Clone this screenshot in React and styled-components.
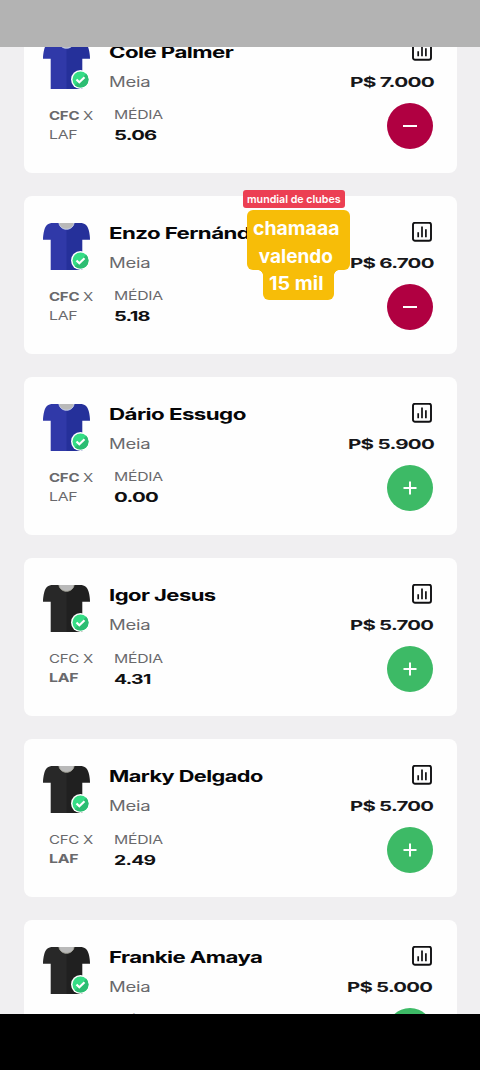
import React, { useLayoutEffect, useRef, useState } from 'react'
import styled, { createGlobalStyle } from 'styled-components'

const GlobalStyles = createGlobalStyle`
  * { box-sizing: border-box; }
  body {
    margin: 0;
    background: #000;
    font-family: Inter, "Liberation Sans", sans-serif;
  }
`

const Screen = styled.div`
  position: relative;
  display: flex;
  flex-direction: column;
  width: 480px;
  height: 1070px;
  overflow: hidden;
  background: #f0eff1;
`
const StatusBar = styled.header`
  flex: none;
  height: 46.5px;
  background: #b3b3b3;
`
const Viewport = styled.main`
  flex: 1;
  min-height: 0;
  overflow: hidden;
`
const NavBar = styled.footer`
  flex: none;
  height: 56px;
  background: #000;
`
// the list is scrolled a little, the first card starts above the viewport
const List = styled.div`
  display: flex;
  flex-direction: column;
  gap: 23.3px;
  margin-top: -31.5px;
  padding: 0 23.5px;
`
const Card = styled.article`
  flex: none;
  height: 157.8px;
  padding: 25.5px 23.500px 0 19.5px;
  border-radius: 8px;
  background: #fefefe;
`
const Top = styled.div`
  display: flex;
  height: 51px;
`
const Bottom = styled.div`
  display: flex;
  padding: 11px 0 0 6px;
`
const Kit = styled.div`
  position: relative;
  width: 47px;
  height: 48px;
  margin: 1px 18.5px 0 0;
`
const Badge = styled.svg`
  position: absolute;
  left: 28px;
  top: 28px;
`
const Info = styled.div`
  flex: 1;
`
const Side = styled.div`
  display: flex;
  flex-direction: column;
  align-items: flex-end;
  gap: 11px;
`
const StatsIcon = styled.svg`
  margin-right: 1.5px;
`
const Name = styled.div`
  height: 31.2px;
  font-size: 15.8px;
  line-height: 24px;
  font-weight: 700;
  letter-spacing: -0.4px;
  color: #060608;
`
const Position = styled.div`
  font-size: 14px;
  line-height: 20px;
  letter-spacing: -0.2px;
  color: #69696c;
`
const Price = styled.div`
  font-size: 13.5px;
  line-height: 20px;
  font-weight: 700;
  letter-spacing: -0.5px;
  color: #17171a;
`
const Match = styled.div`
  width: 65px;
  padding-top: 4.6px;
  font-size: 12px;
  line-height: 18.7px;
  letter-spacing: -0.2px;
  color: #69696c;
`
const Team = styled.div`
  display: flex;
  gap: 3.5px;
  font-weight: ${({ picked }) => (picked ? 700 : 400)};
`
const Versus = styled.span`
  font-weight: 400;
`
const Average = styled.div`
  flex: 1;
  padding-top: 2.8px;
  line-height: 20px;
`
const AverageLabel = styled.div`
  font-size: 12px;
  letter-spacing: -0.2px;
  color: #69696c;
`
const AverageValue = styled.div`
  font-size: 13.5px;
  font-weight: 700;
  letter-spacing: -0.5px;
  color: #101012;
`
const RoundButton = styled.button`
  display: flex;
  align-items: center;
  justify-content: center;
  width: 46.5px;
  height: 46.5px;
  padding: 0;
  border: 0;
  border-radius: 50%;
  background: ${({ remove }) => (remove ? '#b00041' : '#3dba66')};
`
const Stickers = styled.div`
  position: absolute;
  left: 242.5px;
  top: 189.5px;
  width: 108px;
  font-weight: 700;
  color: #fff;
`
const Tag = styled.div`
  display: flex;
  justify-content: center;
  width: 102.5px;
  height: 18.5px;
  border-radius: 3px;
  background: #ec3f53;
  font-size: 11px;
  line-height: 18.5px;
  font-weight: 600;
`
const Note = styled.div`
  display: flex;
  flex-direction: column;
  align-items: center;
  width: 103px;
  margin: 2px 0 0 4.3px;
`
const NoteBlock = styled.div`
  display: flex;
  flex-direction: column;
  align-items: center;
  width: 103px;
  height: 60px;
  padding: 5px 5px 0 0;
  border-radius: 6px;
  background: #f7bd08;
  font-size: 19px;
  line-height: 27.5px;
`
const NoteTail = styled.div`
  position: relative;
  width: 71px;
  height: 30px;
  padding: 0 0 0 6.5px;
  margin-left: -0.5px;
  border-radius: 0 0 6px 6px;
  background: #f7bd08;
  font-size: 19px;
  line-height: 27.5px;

  &::before,
  &::after {
    content: '';
    position: absolute;
    top: 0;
    width: 5px;
    height: 5px;
  }
  &::before {
    left: -5px;
    background: radial-gradient(circle at 0 100%, transparent 4.5px, #f7bd08 5px);
  }
  &::after {
    right: -5px;
    background: radial-gradient(circle at 100% 100%, transparent 4.5px, #f7bd08 5px);
  }
`
const FitBox = styled.span`
  display: block;
  white-space: nowrap;
`
const FitInner = styled.span`
  display: inline-block;
  transform-origin: 0 50%;
`

// draws its text extended to the given width
const Fit = ({ width, children }) => {
  const ref = useRef(null)
  const [scale, setScale] = useState(1)

  useLayoutEffect(() => {
    const measure = () => ref.current && setScale(width / ref.current.offsetWidth)
    measure()
    document.fonts.ready.then(measure)
  }, [width, children])

  return (
    <FitBox style={{ width }}>
      <FitInner ref={ref} style={{ transform: `scaleX(${scale})` }}>{children}</FitInner>
    </FitBox>
  )
}

const kits = {
  CFC: { left: '#3039a8', right: '#25309a', trim: '#c9d3ee' },
  LAF: { left: '#282828', right: '#202020', trim: '#a9a99e' },
}

const Shirt = ({ team }) => {
  const { left, right, trim } = kits[team]
  return (
    <svg width="47" height="47" viewBox="0 0 47 47">
      <path d="M24 0H10C5 0 2.500 2.500 1.300 7 .400 10.500 0 13.500 0 16.800h7.700V47H24z" fill={left} />
      <path d="M23.500 0H37c5 0 7.500 2.500 8.700 7 .900 3.500 1.300 6.500 1.300 9.800h-7.700V47H23.500z" fill={right} />
      <path d="M16 0h15c-1 8.300-14 8.300-15 0z" fill="#b9b9b9" />
      <path d="M16 0c1 8.300 14 8.300 15 0" fill="none" stroke={trim} strokeWidth="1" />
    </svg>
  )
}

const Check = () => (
  <Badge width="19" height="19" viewBox="0 0 19 19">
    <circle cx="9.500" cy="9.500" r="9.500" fill="#fff" />
    <circle cx="9.500" cy="9.500" r="8" fill="#35dd85" />
    <path d="M15.200 3.800A8 8 0 0 1 3.800 15.200z" fill="#2cbd72" />
    <path d="m5.500 9.500 2.800 2.800 5.200-5.100" fill="none" stroke="#fff" strokeWidth="2.200" />
  </Badge>
)

const Stats = () => (
  <StatsIcon width="20" height="20" viewBox="0 0 20 20" fill="none" stroke="#101012" strokeWidth="1.900">
    <rect x="1" y=".7" width="18" height="18" rx="2" />
    <path d="M6.200 10.200v5M10 4.500v10.700M13.900 7.200v8" strokeWidth="1.700" />
  </StatsIcon>
)

const players = [
  { name: 'Cole Palmer', nameWidth: 124, team: 'CFC', price: 'P$ 7.000', priceWidth: 83.5, avg: '5.06', avgWidth: 42, added: true },
  { name: 'Enzo Fernández', nameWidth: 166, team: 'CFC', price: 'P$ 6.700', priceWidth: 83.5, avg: '5.18', avgWidth: 35.5, added: true },
  { name: 'Dário Essugo', nameWidth: 137, team: 'CFC', price: 'P$ 5.900', priceWidth: 85.5, avg: '0.00', avgWidth: 44 },
  { name: 'Igor Jesus', nameWidth: 106, team: 'LAF', price: 'P$ 5.700', priceWidth: 83, avg: '4.31', avgWidth: 36 },
  { name: 'Marky Delgado', nameWidth: 154, team: 'LAF', price: 'P$ 5.700', priceWidth: 83, avg: '2.49', avgWidth: 41.5 },
  { name: 'Frankie Amaya', nameWidth: 153, team: 'LAF', price: 'P$ 5.000', priceWidth: 86, avg: '3.12', avgWidth: 38 },
]

const PlayerCard = ({ player }) => (
  <Card>
    <Top>
      <Kit>
        <Shirt team={player.team} />
        <Check />
      </Kit>
      <Info>
        <Name><Fit width={player.nameWidth}>{player.name}</Fit></Name>
        <Position><Fit width={41}>Meia</Fit></Position>
      </Info>
      <Side>
        <Stats />
        <Price><Fit width={player.priceWidth}>{player.price}</Fit></Price>
      </Side>
    </Top>
    <Bottom>
      <Match>
        <Team picked={player.team === 'CFC'}>
          <Fit width={30}>CFC</Fit>
          <Versus><Fit width={10}>X</Fit></Versus>
        </Team>
        <Team picked={player.team === 'LAF'}><Fit width={29}>LAF</Fit></Team>
      </Match>
      <Average>
        <AverageLabel><Fit width={48.5}>MÉDIA</Fit></AverageLabel>
        <AverageValue><Fit width={player.avgWidth}>{player.avg}</Fit></AverageValue>
      </Average>
      <RoundButton remove={player.added ? 1 : undefined}>
        <svg width="14" height="14" viewBox="0 0 14 14" stroke="#fff" strokeWidth="2">
          <path d={player.added ? 'M0 7h14' : 'M.500 7h13M7 .500v13'} />
        </svg>
      </RoundButton>
    </Bottom>
  </Card>
)

const App = () => (
  <>
    <GlobalStyles />
    <Screen>
      <StatusBar />
      <Viewport>
        <List>
          {players.map((player) => <PlayerCard key={player.name} player={player} />)}
        </List>
      </Viewport>
      <NavBar />
      <Stickers>
        <Tag><Fit width={94}>mundial de clubes</Fit></Tag>
        <Note>
          <NoteBlock>
            <Fit width={86}>chamaaa</Fit>
            <Fit width={74}>valendo</Fit>
          </NoteBlock>
          <NoteTail><Fit width={54}>15 mil</Fit></NoteTail>
        </Note>
      </Stickers>
    </Screen>
  </>
)

export default App
